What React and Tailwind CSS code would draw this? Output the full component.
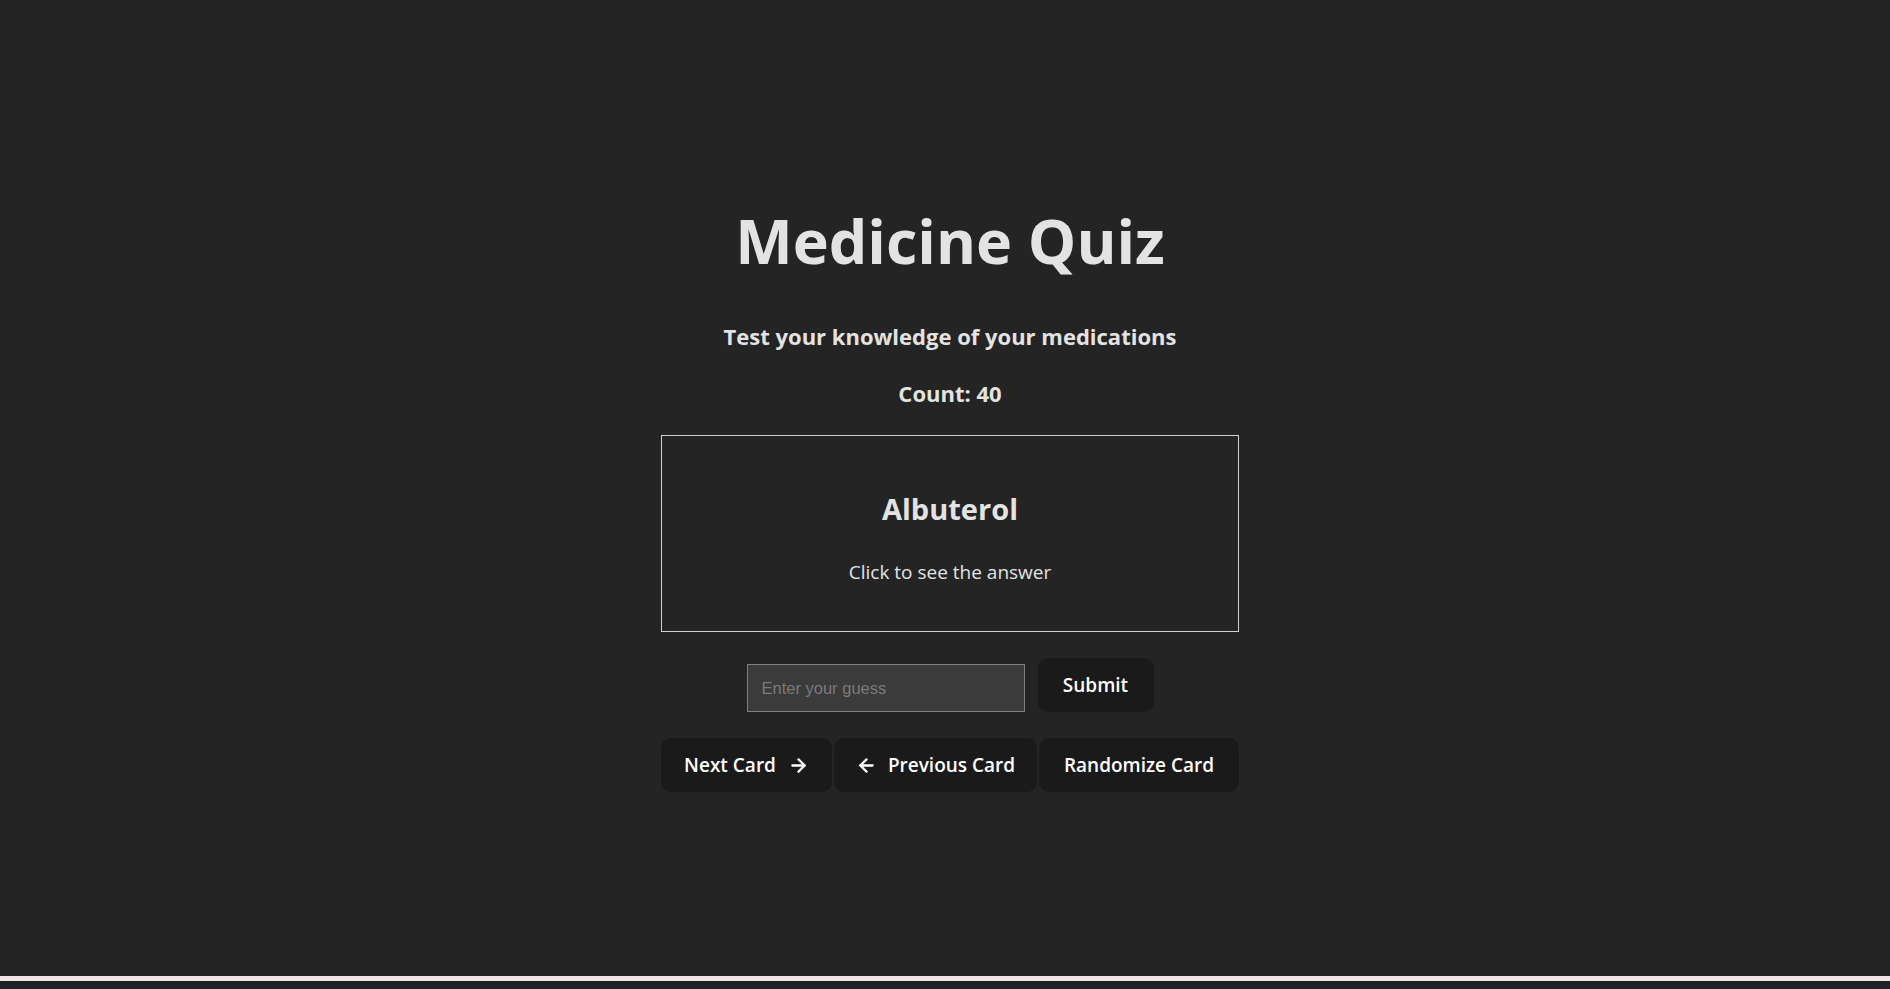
import { ArrowLeft, ArrowRight } from "lucide-react"

export default function App() {
  return (
    <div className="flex h-[989px] flex-col bg-[#242424] font-['Open_Sans',sans-serif] text-[#e3e3e3]">
      <main className="flex flex-1 flex-col items-center pl-[10px]">
        <h1 className="mt-[210px] text-[61px] font-bold leading-none">Medicine Quiz</h1>

        <h3 className="mt-[54px] text-[22px] font-bold leading-none">
          Test your knowledge of your medications
        </h3>

        <p className="mt-[35px] text-[22px] font-bold leading-none">Count: 40</p>

        <div className="mt-[31px] flex h-[197px] w-[578px] cursor-pointer flex-col items-center border border-[#d0d0d0] pt-[58px]">
          <h2 className="text-[29px] font-bold leading-none">Albuterol</h2>
          <p className="mt-[40px] text-[19px] leading-none">Click to see the answer</p>
        </div>

        <div className="mt-[26px] flex items-end gap-[13px]">
          <input
            type="text"
            placeholder="Enter your guess"
            className="h-[48px] w-[278px] border border-[#808080] bg-[#3b3b3b] px-[14px] font-['Liberation_Sans',Arial,sans-serif] text-[16.5px] text-white placeholder:text-[#7a7a7a] outline-none"
          />
          <button className="h-[54px] w-[116px] rounded-[10px] bg-[#1a1a1a] text-[19px] font-semibold text-white">
            Submit
          </button>
        </div>

        <div className="mt-[26px] flex gap-[2px]">
          <button className="flex h-[54px] w-[171px] items-center justify-center gap-[12px] rounded-[10px] bg-[#1a1a1a] text-[19px] font-semibold text-white">
            Next Card
            <ArrowRight size={21} strokeWidth={2.6} />
          </button>
          <button className="flex h-[54px] w-[203px] items-center justify-center gap-[11px] rounded-[10px] bg-[#1a1a1a] text-[19px] font-semibold text-white">
            <ArrowLeft size={21} strokeWidth={2.6} />
            Previous Card
          </button>
          <button className="flex h-[54px] w-[200px] items-center justify-center rounded-[10px] bg-[#1a1a1a] text-[19px] font-semibold text-white">
            Randomize Card
          </button>
        </div>
      </main>

      {/* window frame strip at the bottom of the capture */}
      <div className="h-[5px] bg-[#f2e5e5]" />
      <div className="h-[8px] bg-[#202127]" />
    </div>
  )
}
